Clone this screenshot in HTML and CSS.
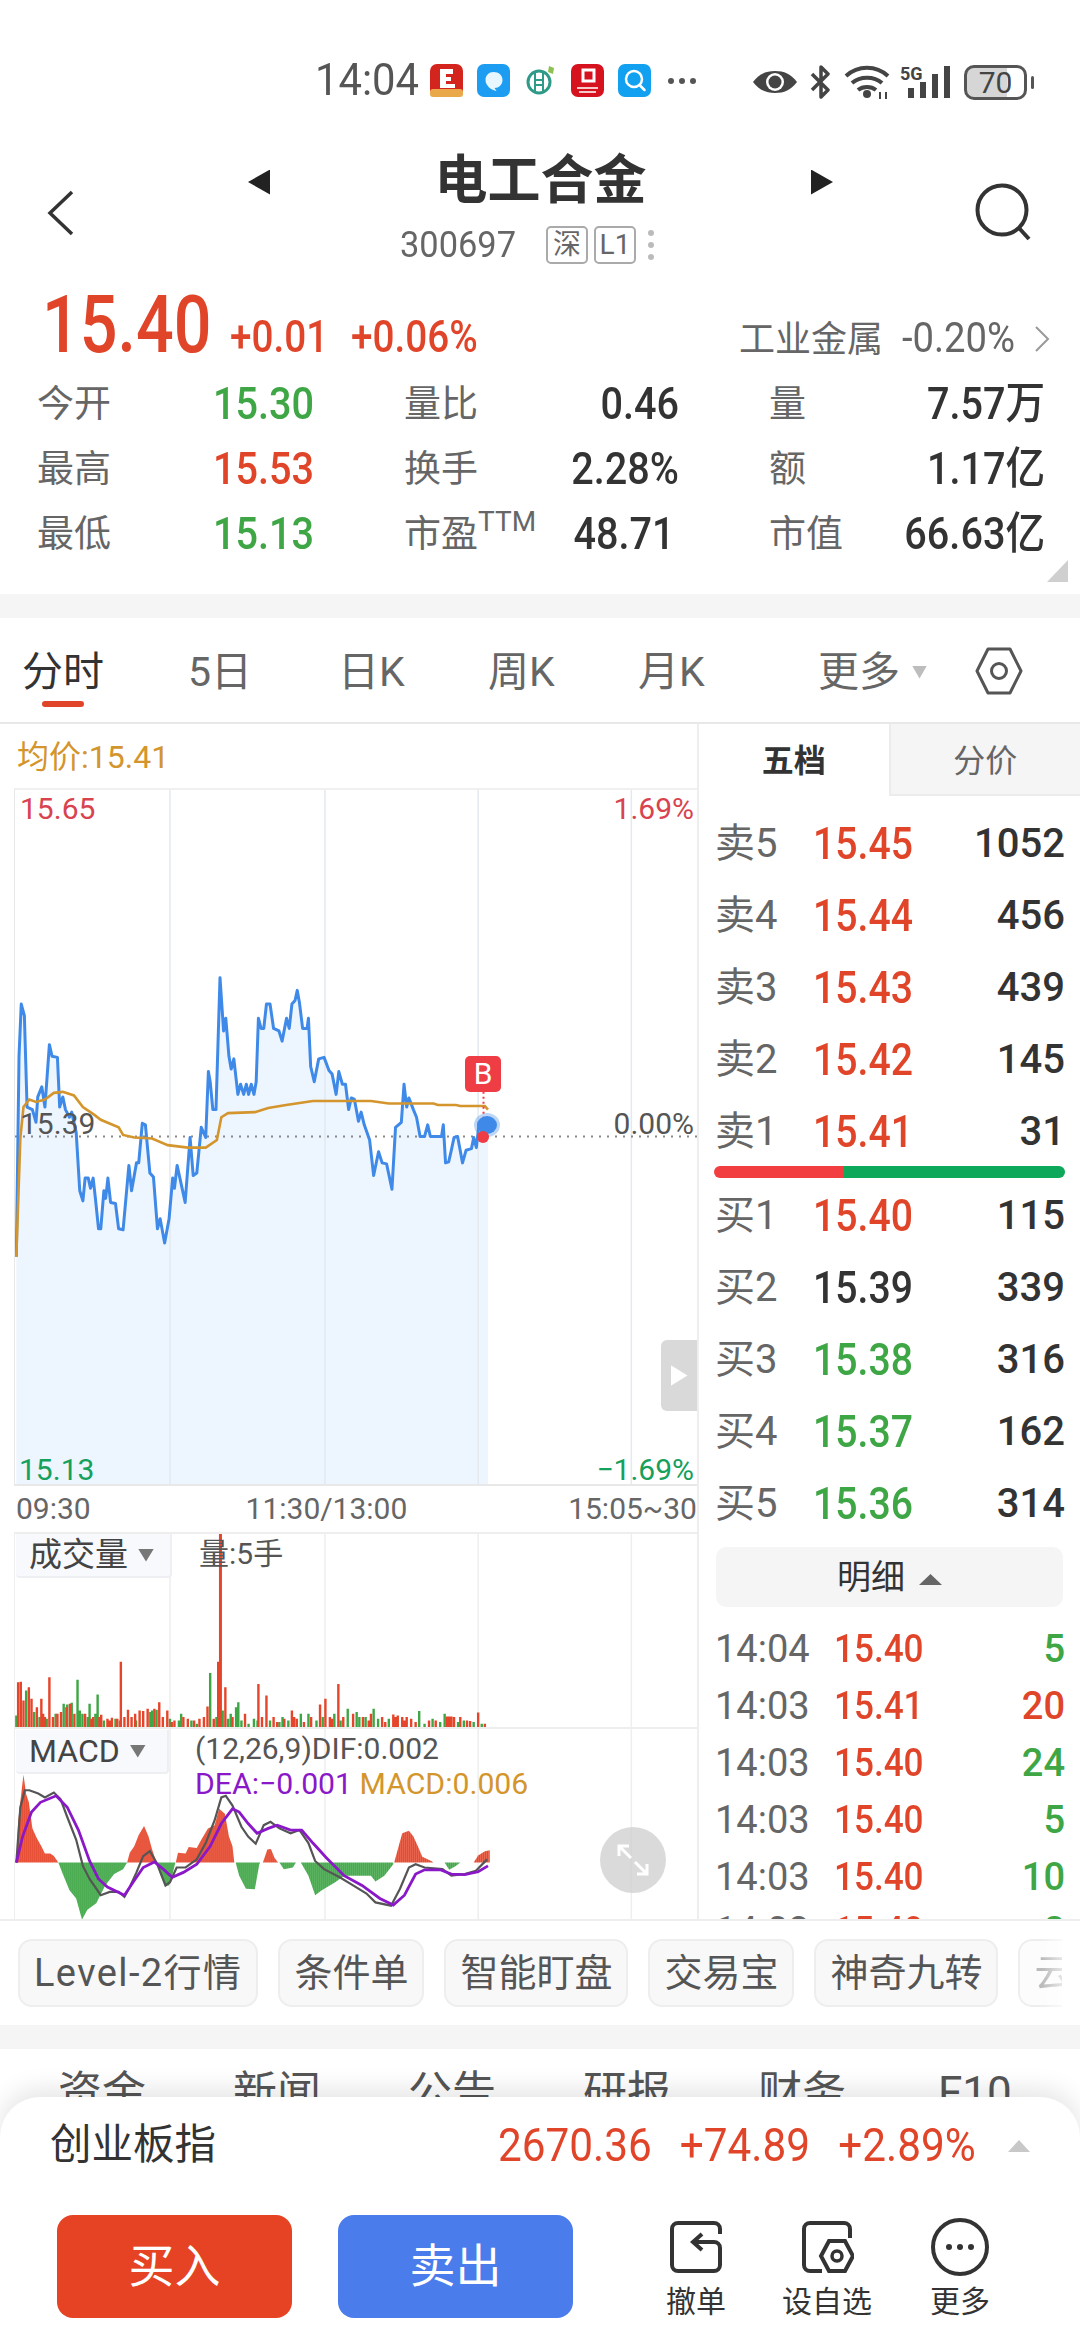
FILE: index.html
```html
<!DOCTYPE html>
<html lang="zh">
<head>
<meta charset="utf-8">
<title>电工合金</title>
<link rel="stylesheet" href="styles.css">
</head>
<body>
<div class="app">
  <div class="status">
    <span class="time">14:04</span>
    <div class="notif">
      <svg class="ni" viewBox="0 0 33 33"><rect width="33" height="33" rx="7" fill="#d3241e"/><rect y="25" width="33" height="8" rx="3" fill="#e9a94a"/><path d="M10 5h13v5h-7v3h5v4h-5v3h9v4H10z" fill="#fff"/></svg>
      <svg class="ni" viewBox="0 0 33 33"><rect width="33" height="33" rx="7" fill="#1c9df2"/><path d="M16.500 8c5.500 0 9 3.500 9 8s-3.500 8-8 8l2 3c-5-1-11-5-11-11 0-4.500 3.500-8 8-8z" fill="#e8f6ff"/></svg>
      <svg class="ni" viewBox="0 0 33 33"><circle cx="15" cy="18" r="11" fill="none" stroke="#2f9a87" stroke-width="3"/><path d="M11 8v20M19 8v20M10 16h10M10 21h10" stroke="#2f9a87" stroke-width="2"/><path d="M25 2l5 2-1 6-5-2z" fill="#8cc152"/></svg>
      <svg class="ni" viewBox="0 0 33 33"><rect width="33" height="33" rx="7" fill="#d5121e"/><path d="M12 6h11v11H12z" fill="none" stroke="#fff" stroke-width="3"/><path d="M6 23h21v2H6zM8 27h17v2H8z" fill="#f8c9c9"/></svg>
      <svg class="ni" viewBox="0 0 33 33"><rect width="33" height="33" rx="7" fill="#12a0f0"/><circle cx="16" cy="15" r="8" fill="none" stroke="#fff" stroke-width="2.500"/><path d="M21.500 21l5 5" stroke="#fff" stroke-width="2.500" stroke-linecap="round"/></svg>
      <span class="ndots"><i></i><i></i><i></i></span>
    </div>
    <div class="sys">
      <svg class="s-eye" viewBox="0 0 46 24"><path d="M1 12C7 4 14 1 23 1s16 3 22 11c-6 8-13 11-22 11S7 20 1 12z" fill="#444"/><circle cx="23" cy="12" r="9" fill="#fff"/><circle cx="23" cy="12" r="6.500" fill="#444"/></svg>
      <svg class="s-bt" viewBox="0 0 24 34"><path d="M3 9l16 16-7 7V2l7 7L3 25" fill="none" stroke="#444" stroke-width="3.500" stroke-linejoin="round"/></svg>
      <svg class="s-wifi" viewBox="0 0 46 34"><path d="M2 11c12-11 30-11 42 0M8 18c8-7 22-7 30 0M14 25c5-4 13-4 18 0" fill="none" stroke="#444" stroke-width="4"/><circle cx="23" cy="29" r="4" fill="#444"/><path d="M36 27v7M42 27v7" stroke="#444" stroke-width="2"/></svg>
      <div class="s-5g"><span>5G</span><svg viewBox="0 0 44 32"><path d="M4 22v10M16 16v16M28 8v24M40 0v32" stroke="#444" stroke-width="6"/></svg></div>
      <div class="batt"><span>70</span></div><i class="nub"></i>
    </div>
  </div>

  <div class="head">
    <svg class="back" viewBox="0 0 30 46"><path d="M26 2L4 23l22 21" fill="none" stroke="#333" stroke-width="3.500"/></svg>
    <div class="head-mid">
      <div class="title-row">
        <i class="tri tri-l"></i>
        <h1 class="title">电工合金</h1>
        <i class="tri tri-r"></i>
      </div>
      <div class="code-row">
        <span class="code">300697</span>
        <span class="tag">深</span>
        <span class="tag tag-2">L1</span>
        <span class="vdots"><i></i><i></i><i></i></span>
      </div>
    </div>
    <svg class="search" viewBox="0 0 58 58"><circle cx="27" cy="27" r="24.500" fill="none" stroke="#333" stroke-width="4"/><path d="M44 45l10 11" stroke="#333" stroke-width="4"/></svg>
  </div>

  <section class="quote">
    <div class="price-row">
      <span class="big">15.40</span>
      <span class="chg c1">+0.01</span>
      <span class="chg c2">+0.06%</span>
      <div class="ind">
        <span class="ind-name">工业金属</span>
        <span class="ind-val">-0.20%</span>
        <svg class="ind-chev" viewBox="0 0 16 26"><path d="M2 1l12 12L2 25" fill="none" stroke="#999" stroke-width="2"/></svg>
      </div>
    </div>
    <div class="stats">
      <span class="lab">今开</span><b class="val green">15.30</b><span class="lab">量比</span><b class="val end dark">0.46</b><span class="lab lab3">量</span><b class="val end dark">7.57万</b>
      <span class="lab">最高</span><b class="val red">15.53</b><span class="lab">换手</span><b class="val end dark">2.28%</b><span class="lab lab3">额</span><b class="val end dark">1.17亿</b>
      <span class="lab">最低</span><b class="val green">15.13</b><span class="lab">市盈<sup class="ttm">TTM</sup></span><b class="val end dark pe">48.71</b><span class="lab lab3">市值</span><b class="val end dark">66.63亿</b>
    </div>
    <i class="corner"></i>
  </section>
  <div class="band"></div>

  <nav class="tabs">
    <a class="tab w1 active">分时</a>
    <a class="tab w2">5日</a>
    <a class="tab w2">日K</a>
    <a class="tab w2">周K</a>
    <a class="tab w3">月K</a>
    <a class="tab w4">更多<i class="tri-d"></i></a>
    <svg class="hex" viewBox="0 0 48 48"><path d="M13 2h22l11 22-11 22H13L2 24z" fill="none" stroke="#555" stroke-width="3" stroke-linejoin="round"/><circle cx="24" cy="24" r="7.500" fill="none" stroke="#555" stroke-width="3"/></svg>
  </nav>

  <div class="main">
    <div class="left">
      <div class="avg">均价:15.41</div>
      <div class="chart">
        <svg class="fill-svg" viewBox="33 95 1527 1368" preserveAspectRatio="none">
          <polygon class="area" points="36,1463 36,1015 42,620 47,517 54,540 60,720 72,725 80,750 84,700 93,680 100,720 110,597 116,620 128,622 133,720 140,700 146,725 155,740 160,730 170,770 178,885 185,905 190,860 197,860 202,880 208,860 213,900 220,960 225,960 232,885 236,900 241,860 247,908 258,910 265,960 275,962 288,835 294,885 305,830 310,830 318,752 325,755 335,850 343,858 352,960 358,940 368,988 378,940 386,860 390,880 396,835 414,908 425,780 432,855 440,850 450,760 460,780 466,650 470,670 476,725 483,725 492,465 500,570 505,545 512,620 517,645 523,625 532,695 538,675 545,695 551,675 556,695 562,675 568,695 573,670 578,545 584,565 590,565 596,517 604,517 612,565 624,570 631,590 641,545 647,565 653,517 660,510 665,490 670,515 677,565 687,565 690,545 695,640 703,670 713,625 725,622 736,648 743,655 752,695 758,650 766,675 773,675 780,725 786,702 793,705 802,748 808,730 815,755 827,785 836,855 847,808 855,830 865,832 877,882 885,760 898,750 904,675 910,720 915,702 925,725 932,740 940,778 950,778 957,755 963,778 988,778 992,755 997,830 1004,828 1010,805 1016,780 1024,778 1035,830 1043,805 1055,802 1060,780 1066,800 1072,752 1092,745 1092,1463"/>
          <path class="grid" d="M380 95V1463M727 95V1463M1070 95V1463M1413 95V1463"/>
          <path class="zero" d="M33 778H1560"/>
          <polyline class="ln-blue" points="36,1015 42,620 47,517 54,540 60,720 72,725 80,750 84,700 93,680 100,720 110,597 116,620 128,622 133,720 140,700 146,725 155,740 160,730 170,770 178,885 185,905 190,860 197,860 202,880 208,860 213,900 220,960 225,960 232,885 236,900 241,860 247,908 258,910 265,960 275,962 288,835 294,885 305,830 310,830 318,752 325,755 335,850 343,858 352,960 358,940 368,988 378,940 386,860 390,880 396,835 414,908 425,780 432,855 440,850 450,760 460,780 466,650 470,670 476,725 483,725 492,465 500,570 505,545 512,620 517,645 523,625 532,695 538,675 545,695 551,675 556,695 562,675 568,695 573,670 578,545 584,565 590,565 596,517 604,517 612,565 624,570 631,590 641,545 647,565 653,517 660,510 665,490 670,515 677,565 687,565 690,545 695,640 703,670 713,625 725,622 736,648 743,655 752,695 758,650 766,675 773,675 780,725 786,702 793,705 802,748 808,730 815,755 827,785 836,855 847,808 855,830 865,832 877,882 885,760 898,750 904,675 910,720 915,702 925,725 932,740 940,778 950,778 957,755 963,778 988,778 992,755 997,830 1004,828 1010,805 1016,780 1024,778 1035,830 1043,805 1055,802 1060,780 1066,800 1072,752 1090,745"/>
          <polyline class="ln-avg" points="36,1015 45,780 52,720 65,705 80,710 100,705 120,692 140,690 165,697 185,720 210,735 225,745 265,760 275,775 300,780 340,782 375,795 420,800 460,800 485,785 495,740 510,732 570,730 600,722 640,716 700,708 780,708 830,708 870,713 970,713 980,716 1020,716 1030,718 1085,718 1092,725"/>
          <path class="mark-line" d="M1082 690V778"/>
        </svg>
        <span class="cl t-l red2">15.65</span>
        <span class="cl t-r red2">1.69%</span>
        <span class="cl m-l">15.39</span>
        <span class="cl m-r">0.00%</span>
        <span class="cl b-l green2">15.13</span>
        <span class="cl b-r green2">−1.69%</span>
        <span class="b-tag">B</span>
        <i class="dot-blue"></i>
        <i class="dot-red"></i>
        <div class="handle"><i></i></div>
      </div>
      <div class="axis"><span>09:30</span><span class="ax-mid">11:30/13:00</span><span>15:05~30</span></div>
      <div class="vol">
        <svg class="fill-svg" viewBox="33 97 1527 583" preserveAspectRatio="none">
          <path class="grid2" d="M380 97V680M727 97V680M1070 97V680M1413 97V680"/>
          <path class="bar-g" d="M36 680V645M58 680V570M76 680V635M88 680V650M104 680V655M124 680V640M142 680V610M150 680V612M160 680V607M173 680V537M178 680V630M184 680V640M196 680V650M200 680V610M213 680V640M218 680V582M232 680V660M258 680V655M268 680V660M304 680V660M336 680V635M340 680V630M350 680V628M380 680V655M400 680V660M405 680V640M428 680V660M440 680V670M470 680V517M484 680V650M498 680V630M510 680V655M516 680V640M528 680V620M533 680V605M540 680V660M556 680V670M568 680V655M576 680V660M604 680V660M625 680V665M632 680V650M645 680V660M673 680V640M690 680V640M708 680V660M722 680V650M748 680V640M762 680V660M778 680V625M798 680V635M804 680V650M818 680V650M836 680V625M846 680V655M870 680V655M938 680V632M950 680V670M968 680V655M985 680V665M995 680V640M1025 680V665M1038 680V660M1060 680V665M1078 680V670"/>
          <path class="bar-r" d="M40 680V545M46 680V543M52 680V600M64 680V560M70 680V595M82 680V620M92 680V595M96 680V640M100 680V650M110 680V530M118 680V650M128 680V640M136 680V635M148 680V620M156 680V610M166 680V640M190 680V640M204 680V655M208 680V650M222 680V650M226 680V643M240 680V655M245 680V660M250 680V652M262 680V655M270 680V483M278 680V650M286 680V628M294 680V650M302 680V640M312 680V630M320 680V632M330 680V625M345 680V625M356 680V605M364 680V650M374 680V630M384 680V665M390 680V660M410 680V650M420 680V655M434 680V660M446 680V655M456 680V650M464 680V618M478 680V655M488 680V483M504 680V560M520 680V650M548 680V640M578 680V550M586 680V650M596 680V585M612 680V650M620 680V665M636 680V655M653 680V630M658 680V650M664 680V655M680 680V665M696 680V650M716 680V612M728 680V595M738 680V650M743 680V655M757 680V550M768 680V650M790 680V640M812 680V650M825 680V660M830 680V640M855 680V650M862 680V665M880 680V642M885 680V650M890 680V645M900 680V650M905 680V660M910 680V650M920 680V655M930 680V665M960 680V660M975 680V660M1000 680V648M1005 680V648M1010 680V648M1016 680V650M1030 680V650M1045 680V660M1052 680V662M1070 680V636M1085 680V670"/>
          <path class="bar-tall" d="M493 680V97"/>
        </svg>
        <div class="ind-box"><span>成交量</span><i class="tri-d"></i></div>
        <span class="vol-txt">量:5手</span>
      </div>
      <div class="macd">
        <svg class="fill-svg" viewBox="33 680 1527 583" preserveAspectRatio="none">
          <defs>
            <pattern id="stripe-r" patternUnits="userSpaceOnUse" width="4.48" height="10"><rect width="3.9" height="10" fill="#e5452a"/></pattern>
            <pattern id="stripe-g" patternUnits="userSpaceOnUse" width="4.48" height="10"><rect width="3.9" height="10" fill="#3ea645"/></pattern>
          </defs>
          <path class="grid2" d="M380 680V1263M727 680V1263M1070 680V1263M1413 680V1263"/>
          <g class="h-r">
            <polygon points="36,1090 40,965 46,890 52,820 58,880 64,905 72,985 82,1015 92,1040 100,1062 112,1062 120,1070 130,1090"/>
            <polygon points="284,1090 290,1060 300,1040 310,1005 322,978 332,1010 340,1050 350,1090"/>
            <polygon points="393,1090 398,1060 415,1062 422,1042 440,1045 450,1020 465,985 480,975 490,925 503,940 512,1010 520,1040 524,1090"/>
            <polygon points="588,1090 598,1050 606,1048 614,1075 622,1090"/>
            <polygon points="882,1090 890,1050 900,1000 915,992 925,1010 935,1040 945,1072 965,1085 970,1090"/>
            <polygon points="1060,1090 1070,1068 1085,1055 1096,1052 1096,1090"/>
          </g>
          <g class="h-g">
            <polygon points="130,1090 140,1125 155,1175 170,1200 183,1265 195,1235 215,1215 235,1160 255,1125 275,1110 284,1090"/>
            <polygon points="350,1090 358,1125 368,1160 378,1160 385,1130 392,1090"/>
            <polygon points="527,1090 535,1130 550,1170 570,1172 580,1095 582,1090"/>
            <polygon points="625,1090 635,1110 655,1105 662,1090"/>
            <polygon points="673,1090 690,1130 705,1190 720,1175 750,1150 770,1130 830,1130 840,1148 860,1130 880,1095 880,1090"/>
            <polygon points="995,1090 1005,1112 1020,1100 1030,1090"/>
          </g>
          <polyline class="ln-dif" points="36,1090 45,920 55,868 65,868 85,878 100,890 120,875 135,895 150,950 170,1020 185,1100 200,1140 215,1170 225,1190 245,1180 265,1180 278,1195 290,1165 305,1120 320,1070 335,1055 350,1090 370,1160 380,1150 395,1105 415,1105 440,1080 460,1030 480,960 495,890 505,885 520,915 540,980 555,1010 572,1032 590,975 605,965 625,985 650,1000 670,990 690,1030 705,1085 725,1110 760,1135 790,1160 820,1185 840,1212 875,1222 895,1170 915,1105 930,1095 950,1105 990,1110 1010,1130 1040,1125 1065,1115 1090,1080"/>
          <polyline class="ln-dea" points="36,1090 50,1010 70,935 90,905 125,885 150,920 175,990 200,1085 220,1140 240,1165 278,1190 300,1145 320,1105 345,1088 365,1110 385,1135 410,1120 440,1095 470,1040 495,970 520,925 535,935 555,970 575,1000 600,985 620,975 650,990 675,990 700,1030 730,1075 770,1130 810,1160 850,1200 880,1220 905,1190 930,1125 950,1112 985,1112 1010,1125 1040,1127 1070,1118 1092,1100"/>
        </svg>
        <div class="ind-box ind-box2"><span>MACD</span><i class="tri-d"></i></div>
        <div class="macd-txt">
          <div class="mt-1">(12,26,9)DIF:0.002</div>
          <div class="mt-2"><span class="purple">DEA:−0.001</span> <span class="gold">MACD:0.006</span></div>
        </div>
        <div class="expand">
          <svg viewBox="0 0 36 36"><path d="M4 14V4h10M4 4l12 12M32 22v10H22M32 32L20 20" fill="none" stroke="#fff" stroke-width="3"/></svg>
        </div>
      </div>
    </div>

    <aside class="right">
      <div class="rt-tabs"><span class="rt on">五档</span><span class="rt">分价</span></div>
      <div class="book">
        <div class="row"><span class="rl">卖5</span><b class="rp red">15.45</b><b class="rq">1052</b></div>
        <div class="row"><span class="rl">卖4</span><b class="rp red">15.44</b><b class="rq">456</b></div>
        <div class="row"><span class="rl">卖3</span><b class="rp red">15.43</b><b class="rq">439</b></div>
        <div class="row"><span class="rl">卖2</span><b class="rp red">15.42</b><b class="rq">145</b></div>
        <div class="row"><span class="rl">卖1</span><b class="rp red">15.41</b><b class="rq">31</b></div>
        <div class="ratio"><i class="ratio-r"></i><i class="ratio-g"></i></div>
        <div class="row"><span class="rl">买1</span><b class="rp red">15.40</b><b class="rq">115</b></div>
        <div class="row"><span class="rl">买2</span><b class="rp dark">15.39</b><b class="rq">339</b></div>
        <div class="row"><span class="rl">买3</span><b class="rp green">15.38</b><b class="rq">316</b></div>
        <div class="row"><span class="rl">买4</span><b class="rp green">15.37</b><b class="rq">162</b></div>
        <div class="row"><span class="rl">买5</span><b class="rp green">15.36</b><b class="rq">314</b></div>
      </div>
      <div class="detail-btn">明细<i class="tri-u"></i></div>
      <div class="ticks">
        <div class="tick"><span class="tt">14:04</span><b class="tp red">15.40</b><b class="tq green">5</b></div>
        <div class="tick"><span class="tt">14:03</span><b class="tp red">15.41</b><b class="tq red">20</b></div>
        <div class="tick"><span class="tt">14:03</span><b class="tp red">15.40</b><b class="tq green">24</b></div>
        <div class="tick"><span class="tt">14:03</span><b class="tp red">15.40</b><b class="tq green">5</b></div>
        <div class="tick"><span class="tt">14:03</span><b class="tp red">15.40</b><b class="tq green">10</b></div>
        <div class="tick tick-last"><span class="tt">14:03</span><b class="tp red">15.40</b><b class="tq green">8</b></div>
      </div>
    </aside>
  </div>

  <div class="chips">
    <span class="chip chip-wide">Level-2行情</span>
    <span class="chip">条件单</span>
    <span class="chip">智能盯盘</span>
    <span class="chip">交易宝</span>
    <span class="chip">神奇九转</span>
    <span class="chip chip-fade">云</span>
  </div>
  <div class="band"></div>
  <div class="sub-tabs">
    <span>资金</span><span>新闻</span><span>公告</span><span>研报</span><span>财务</span><span class="f10">F10</span>
  </div>

  <div class="sheet">
    <div class="idx">
      <span class="idx-name">创业板指</span>
      <div class="idx-vals"><span>2670.36</span><span>+74.89</span><span>+2.89%</span></div>
      <i class="tri-idx"></i>
    </div>
    <div class="actions">
      <button class="btn buy">买入</button>
      <button class="btn sell">卖出</button>
      <div class="act a1">
        <svg viewBox="0 0 54 54"><path d="M51 14V9a6 6 0 0 0-6-6H9a6 6 0 0 0-6 6v36a6 6 0 0 0 6 6h36a6 6 0 0 0 6-6V28a6 6 0 0 0-6-6H26" fill="none" stroke="#333" stroke-width="4"/><path d="M33 14l-9 8 9 8" fill="none" stroke="#333" stroke-width="4"/></svg>
        <span>撤单</span>
      </div>
      <div class="act a2">
        <svg viewBox="0 0 54 54"><path d="M22 51H10a6 6 0 0 1-6-6V9a6 6 0 0 1 6-6h34a6 6 0 0 1 6 6v9" fill="none" stroke="#333" stroke-width="4"/><path d="M29 21h16l8 15-8 15H29l-8-15z" fill="none" stroke="#333" stroke-width="4"/><circle cx="37" cy="36" r="5" fill="none" stroke="#333" stroke-width="3.500"/></svg>
        <span>设自选</span>
      </div>
      <div class="act a3">
        <svg viewBox="0 0 58 58"><circle cx="29" cy="29" r="27" fill="none" stroke="#333" stroke-width="4"/><circle cx="18" cy="29" r="3" fill="#333"/><circle cx="29" cy="29" r="3" fill="#333"/><circle cx="40" cy="29" r="3" fill="#333"/></svg>
        <span>更多</span>
      </div>
    </div>
  </div>
</div>
</body>
</html>
```
FILE: styles.css
```css
* { box-sizing: border-box; }
html, body { margin: 0; padding: 0; background: #fff; }
body { font-family: Roboto, "Noto Sans CJK SC", sans-serif; color: #333; }
i { display: block; font-style: normal; }
.app { position: relative; width: 1080px; height: 2340px; overflow: hidden; background: #fff; }

.red { color: #e0452a; }
.green { color: #3ea645; }
.dark { color: #333; }
.red2 { color: #d8434f; }
.green2 { color: #15a05c; }
.purple { color: #8a18c8; }
.gold { color: #d3952c; }

/* status bar */
.status { height: 130px; padding: 64px 0 0 315px; display: flex; align-items: flex-start; }
.time { width: 115px; font-size: 44px; line-height: 33px; color: #555; display: inline-block; transform: scaleX(.95); transform-origin: left; }
.notif { display: flex; align-items: center; gap: 14px; height: 33px; }
.ni { width: 33px; height: 33px; display: block; }
.ndots { display: flex; gap: 5px; margin-left: 3px; }
.ndots i { width: 6px; height: 6px; border-radius: 50%; background: #555; }
.sys { margin-left: auto; padding-right: 46px; display: flex; align-items: center; height: 36px; }
.s-eye { width: 46px; height: 24px; margin-right: 11px; }
.s-bt { width: 24px; height: 34px; margin-right: 11px; }
.s-wifi { width: 46px; height: 34px; margin-right: 10px; }
.s-5g { position: relative; width: 52px; height: 34px; margin-right: 12px; }
.s-5g span { position: absolute; left: 0; top: 0; font-size: 18px; line-height: 18px; font-weight: 700; color: #444; }
.s-5g svg { position: absolute; left: 7px; top: 1px; width: 44px; height: 32px; }
.batt { width: 63px; height: 35px; border: 3px solid #555; border-radius: 10px; text-align: center; background: linear-gradient(90deg, #d6d6d6 70%, #fff 70%); }
.batt span { font-size: 30px; line-height: 29px; color: #444; display: block; }
.nub { width: 3px; height: 13px; background: #555; border-radius: 2px; margin-left: 4px; }

/* header */
.head { height: 150px; display: flex; align-items: flex-start; }
.back { width: 30px; height: 46px; margin: 60px 0 0 46px; }
.head-mid { width: 604px; margin-left: 164px; padding-top: 20px; }
.title-row { height: 58px; display: flex; align-items: center; justify-content: space-between; padding: 6px 11px 0 8px; }
.title { margin: -2px 0 0; font-size: 53px; line-height: 58px; font-weight: 700; color: #333; }
.tri { width: 22px; height: 25px; background: #222; }
.tri-l { clip-path: polygon(100% 0, 100% 100%, 0 50%); }
.tri-r { clip-path: polygon(0 0, 0 100%, 100% 50%); }
.code-row { display: flex; align-items: center; height: 38px; margin-top: 18px; padding-left: 160px; }
.code { font-size: 37px; line-height: 38px; color: #666; width: 146px; display: inline-block; transform: scaleX(.93); transform-origin: left; }
.tag { width: 42px; height: 38px; border: 2px solid #aaa; border-radius: 5px; font-size: 28px; line-height: 33px; text-align: center; color: #666; }
.tag-2 { margin-left: 6px; }
.vdots { margin-left: 12px; display: flex; flex-direction: column; gap: 6px; }
.vdots i { width: 6px; height: 6px; border-radius: 50%; background: #bbb; }
.search { width: 58px; height: 58px; margin: 53px 0 0 131px; }

/* quote */
.quote { position: relative; height: 314px; }
.price-row { height: 92px; padding: 5px 30px 0 42px; display: flex; align-items: baseline; }
.big { font-size: 80px; line-height: 80px; font-weight: 500; color: #e0452a; width: 188px; display: inline-block; transform: scaleX(.83); transform-origin: left; }
.chg { font-size: 44px; line-height: 42px; font-weight: 500; color: #e0452a; display: inline-block; transform: scaleX(.88); transform-origin: left; }
.c1 { width: 121px; }
.ind { margin-left: auto; display: flex; align-items: baseline; margin-top: -2px; }
.ind-name { font-size: 36px; line-height: 42px; color: #666; width: 163px; }
.ind-val { font-size: 42px; line-height: 42px; color: #666; width: 132px; display: inline-block; transform: scaleX(.91); transform-origin: left; }
.ind-chev { width: 16px; height: 26px; align-self: center; }
.stats { padding-left: 37px; display: grid; grid-template-columns: 176px 191px 136px 139px 166px 200px; grid-auto-rows: 65px; align-items: center; }
.lab { font-size: 37px; line-height: 65px; color: #666; white-space: nowrap; }
.lab3 { padding-left: 90px; }
.ttm { font-size: 28px; line-height: 0; vertical-align: 16px; color: #666; }
.val { font-size: 44px; line-height: 65px; font-weight: 500; white-space: nowrap; display: block; transform: scaleX(.9); transform-origin: left; }
.end { text-align: right; transform-origin: right; }
.pe { padding-right: 5px; }
.corner { position: absolute; right: 12px; bottom: 12px; width: 21px; height: 22px; background: #cfcfcf; clip-path: polygon(100% 0, 100% 100%, 0 100%); }
.band { height: 24px; background: #f5f5f5; }

/* tabs */
.tabs { height: 106px; padding: 4px 0 0 22px; border-bottom: 2px solid #e8e8e8; display: flex; align-items: center; }
.tab { position: relative; display: block; font-size: 41px; line-height: 60px; color: #666; }
.w1 { width: 166px; }
.w2 { width: 150px; }
.w3 { width: 180px; }
.w4 { width: 158px; display: flex; align-items: center; }
.active { color: #333; }
.active::after { content: ""; position: absolute; left: 20px; top: 59px; width: 42px; height: 6px; border-radius: 3px; background: #e0452a; }
.tri-d { width: 15px; height: 13px; background: #bdbdbd; clip-path: polygon(0 0, 100% 0, 50% 100%); margin-left: 12px; }
.hex { width: 48px; height: 48px; margin-left: -1px; margin-top: -3px; }

/* main */
.main { height: 1197px; display: flex; border-bottom: 2px solid #eee; }
.left { width: 697px; padding-left: 14px; }
.avg { height: 64px; margin-left: 3px; font-size: 32px; line-height: 66px; color: #d3952c; }
.chart { position: relative; height: 698px; border-top: 2px solid #f0f0f0; border-bottom: 2px solid #e8e8e8; border-left: 1px solid #e8e8e8; }
.fill-svg { position: absolute; left: 0; top: 0; width: 100%; height: 100%; display: block; }
.area { fill: #edf5fe; }
.grid { fill: none; stroke: #e3e9ef; stroke-width: 1.5px; vector-effect: non-scaling-stroke; }
.grid2 { fill: none; stroke: #eeeeee; stroke-width: 1.5px; vector-effect: non-scaling-stroke; }
.zero { fill: none; stroke: #888; stroke-width: 2px; stroke-dasharray: 2 6; vector-effect: non-scaling-stroke; }
.ln-blue { fill: none; stroke: #3f8ae8; stroke-width: 3px; vector-effect: non-scaling-stroke; stroke-linejoin: round; }
.ln-avg { fill: none; stroke: #d3952c; stroke-width: 2.6px; vector-effect: non-scaling-stroke; }
.mark-line { fill: none; stroke: #ef3d45; stroke-width: 2px; stroke-dasharray: 2 3; vector-effect: non-scaling-stroke; }
.cl { position: absolute; font-size: 30px; line-height: 30px; white-space: nowrap; }
.t-l { left: 5px; top: 4px; }
.t-r { right: 3px; top: 4px; }
.m-l { left: 5px; top: 319px; color: #555; }
.m-r { right: 3px; top: 319px; color: #555; }
.b-l { left: 4px; top: 665px; }
.b-r { right: 3px; top: 665px; }
.b-tag { position: absolute; left: 450px; top: 266px; width: 36px; height: 36px; border-radius: 5px; background: #ef3d45; color: #fff; font-size: 30px; line-height: 36px; text-align: center; }
.dot-blue { position: absolute; left: 462px; top: 326px; width: 20px; height: 18px; border-radius: 50%; background: #3f8ae8; box-shadow: 0 0 0 3px rgba(63,138,232,.35); }
.dot-red { position: absolute; left: 462px; top: 341px; width: 12px; height: 12px; border-radius: 50%; background: #ef3d45; }
.handle { position: absolute; right: 0; top: 550px; width: 36px; height: 71px; background: #d9d9d9; border-radius: 6px 0 0 6px; display: flex; align-items: center; justify-content: center; }
.handle i { width: 17px; height: 21px; background: #fff; clip-path: polygon(0 0, 100% 50%, 0 100%); }
.axis { height: 46px; padding-left: 2px; display: flex; justify-content: space-between; font-size: 30px; line-height: 46px; color: #666; }
.ax-mid { margin-left: -6px; }
.vol { position: relative; height: 195px; border-top: 2px solid #eee; border-left: 1px solid #eee; }
.bar-g { fill: none; stroke: #3ea645; stroke-width: 2.4px; vector-effect: non-scaling-stroke; }
.bar-r { fill: none; stroke: #e5452a; stroke-width: 2.4px; vector-effect: non-scaling-stroke; }
.bar-tall { fill: none; stroke: #e5452a; stroke-width: 3px; vector-effect: non-scaling-stroke; }
.ind-box { position: absolute; left: 1px; top: 0; width: 156px; height: 44px; padding-left: 13px; background: #f8f9fc; border: 2px solid #eeeff2; border-top: 0; border-left: 0; border-radius: 0 0 4px 4px; display: flex; align-items: center; font-size: 33px; line-height: 48px; color: #444; }
.ind-box .tri-d { width: 16px; height: 13px; background: #777; margin-left: 10px; }
.ind-box2 { width: 153px; top: 1px; font-size: 32px; }
.vol-txt { position: absolute; left: 184px; top: 3px; font-size: 30px; line-height: 34px; color: #555; }
.macd { position: relative; height: 194px; border-top: 2px solid #eee; border-bottom: 2px solid #eee; border-left: 1px solid #eee; }
.h-r polygon { fill: url(#stripe-r); }
.h-g polygon { fill: url(#stripe-g); }
.ln-dif { fill: none; stroke: #555; stroke-width: 2.2px; vector-effect: non-scaling-stroke; }
.ln-dea { fill: none; stroke: #8a18c8; stroke-width: 2.8px; vector-effect: non-scaling-stroke; }
.macd-txt { position: absolute; left: 180px; top: 2px; font-size: 30px; line-height: 35px; white-space: nowrap; }
.mt-1 { color: #555; }
.mt-2 { font-size: 30.200px; }
.expand { position: absolute; left: 585px; top: 98px; width: 66px; height: 66px; border-radius: 50%; background: rgba(205,205,205,.75); display: flex; align-items: center; justify-content: center; }
.expand svg { width: 36px; height: 36px; }

/* right */
.right { width: 383px; border-left: 2px solid #eee; overflow: hidden; }
.rt-tabs { height: 72px; display: flex; }
.rt { flex: 1; font-size: 32px; line-height: 74px; text-align: center; color: #666; background: #f5f5f5; border: 2px solid #ececec; border-right: 0; border-top: 0; }
.rt.on { background: #fff; color: #333; font-weight: 700; border: 0; }
.book { padding-top: 10px; }
.row { height: 72px; padding: 3px 15px 0 16px; display: flex; align-items: center; }
.rl { width: 98px; font-size: 40px; line-height: 69px; color: #666; white-space: nowrap; }
.rp { font-size: 45px; line-height: 69px; font-weight: 500; display: inline-block; transform: scaleX(.87); transform-origin: left; }
.rq { margin-left: auto; font-size: 40px; line-height: 69px; font-weight: 500; color: #333; display: inline-block; }
.ratio { height: 12px; margin: 0 15px 0 15px; display: flex; }
.ratio-r { width: 130px; background: #f23d41; border-radius: 6px 0 0 6px; }
.ratio-g { flex: 1; background: #0ea85a; border-radius: 0 6px 6px 0; }
.detail-btn { height: 60px; margin: 9px 17px 0 17px; border-radius: 10px; background: #f5f5f5; display: flex; align-items: center; justify-content: center; font-size: 34px; line-height: 62px; color: #333; }
.tri-u { width: 23px; height: 11px; background: #666; clip-path: polygon(50% 0, 100% 100%, 0 100%); margin-left: 14px; margin-top: 5px; }
.ticks { margin-top: 11px; height: 313px; overflow: hidden; }
.tick { height: 57px; padding: 5px 15px 0 16px; display: flex; align-items: center; }
.tick-last { margin-top: -3px; }
.tt { width: 119px; font-size: 38px; line-height: 52px; color: #666; }
.tp { font-size: 39px; line-height: 52px; font-weight: 500; display: inline-block; transform: scaleX(.9); transform-origin: left; }
.tq { margin-left: auto; font-size: 38px; line-height: 52px; font-weight: 500; }

/* chips */
.chips { height: 104px; width: 1062px; padding: 18px 0 0 18px; display: flex; gap: 20px; overflow: hidden; }
.chip { flex: none; height: 68px; padding: 0 14px; border: 2px solid #eee; border-radius: 14px; background: #f8f8f8; font-size: 38px; line-height: 64px; color: #555; white-space: nowrap; }
.chip-wide { letter-spacing: 1.4px; }
.chip-fade { color: #bbb; background: #fcfcfc; width: 80px; -webkit-mask-image: linear-gradient(90deg, #000 30%, rgba(0,0,0,.2) 62%); mask-image: linear-gradient(90deg, #000 30%, rgba(0,0,0,.2) 62%); }
.sub-tabs { position: relative; height: 100px; padding: 16px 0 0 58px; display: flex; gap: 87px; font-size: 44px; line-height: 56px; color: #555; }
.f10 { margin-left: 5px; }

/* sheet */
.sheet { position: absolute; left: 0; bottom: 0; width: 1080px; height: 243px; background: #fff; border-radius: 40px 40px 0 0; box-shadow: 0 -8px 24px rgba(0,0,0,.10); }
.idx { height: 92px; padding: 4px 50px 0; display: flex; align-items: center; }
.idx-name { width: 448px; font-size: 41.500px; line-height: 88px; color: #333; }
.idx-vals { display: flex; font-size: 47px; line-height: 88px; color: #e0452a; transform: scaleX(.9); transform-origin: left; }
.idx-vals span:nth-child(1) { width: 202px; }
.idx-vals span:nth-child(2) { width: 176px; }
.tri-idx { position: absolute; left: 1008px; top: 43px; width: 22px; height: 12px; background: #c8c8c8; clip-path: polygon(50% 0, 100% 100%, 0 100%); }
.actions { padding: 26px 0 0 57px; display: flex; align-items: flex-start; }
.btn { width: 235px; height: 103px; border: 0; border-radius: 16px; font: 400 46px/103px Roboto, "Noto Sans CJK SC", sans-serif; color: #fff; padding: 0; }
.buy { background: #e54323; }
.sell { background: #4a7cec; margin-left: 46px; }
.act { display: flex; flex-direction: column; align-items: center; font-size: 30px; line-height: 44px; color: #333; }
.act svg { display: block; width: 54px; height: 54px; margin-top: 5px; }
.act span { margin-top: 6px; white-space: nowrap; }
.a1 { margin-left: 92px; width: 62px; }
.a2 { margin-left: 54px; width: 92px; }
.a3 { margin-left: 57px; width: 60px; }
.a3 svg { width: 58px; height: 58px; margin-top: 3px; }
.a3 span { margin-top: 4px; }
```
